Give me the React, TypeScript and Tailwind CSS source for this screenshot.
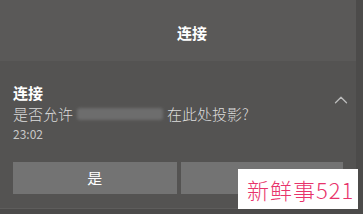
import { ChevronUp } from 'lucide-react';

export default function App() {
    return (
        <div
            className="relative w-[363px] h-[214px] overflow-hidden bg-[#4c4b4a] flex"
            style={{ fontFamily: '"Noto Sans CJK SC", "Noto Sans", sans-serif' }}
        >
            <div className="w-[356px] h-[209px] flex flex-col border-b border-[#5e5d5c]">
                {/* title bar */}
                <div className="h-[61px] bg-[#5a5958] flex items-center justify-center pt-[3px] pl-[28px]">
                    <span className="text-[15px] font-bold text-white leading-none">连接</span>
                </div>

                {/* notification card */}
                <div className="flex-1 bg-[#545352] pt-[22px] px-[13px] flex flex-col">
                    <div className="flex justify-between">
                        <div className="flex flex-col">
                            <div className="text-[15px] font-bold text-white leading-[20px]">连接</div>
                            <div className="flex items-center text-[15px] font-light text-[#dcdcdc] leading-[20px] mt-[1px]">
                                <span>是否允许</span>
                                <span className="w-[86px] h-[12px] mx-[4px] rounded-[3px] bg-[#6d6d6d] blur-[1.5px]" />
                                <span>在此处投影?</span>
                            </div>
                            <div className="text-[12px] text-[#c8c8c8] leading-[16px] mt-[2px]">23:02</div>
                        </div>
                        <ChevronUp className="w-[22px] h-[22px] text-[#bdbdbd] mt-[6px] mr-[-9px]" strokeWidth={1.4} />
                    </div>

                    <div className="flex gap-[4px] mt-[20px]">
                        <button className="w-[164px] h-[32px] bg-[#737373] text-white text-[15px] flex items-center justify-center">
                            是
                        </button>
                        <button className="w-[163px] h-[32px] bg-[#737373]" />
                    </div>
                </div>
            </div>

            {/* watermark */}
            <div className="absolute left-[238px] top-[169px] w-[120px] h-[40px] bg-white flex items-center pl-[9px]">
                <span className="text-[22px] font-light text-[#e8336b] leading-none tracking-[1px]">新鲜事521</span>
            </div>
        </div>
    );
}
